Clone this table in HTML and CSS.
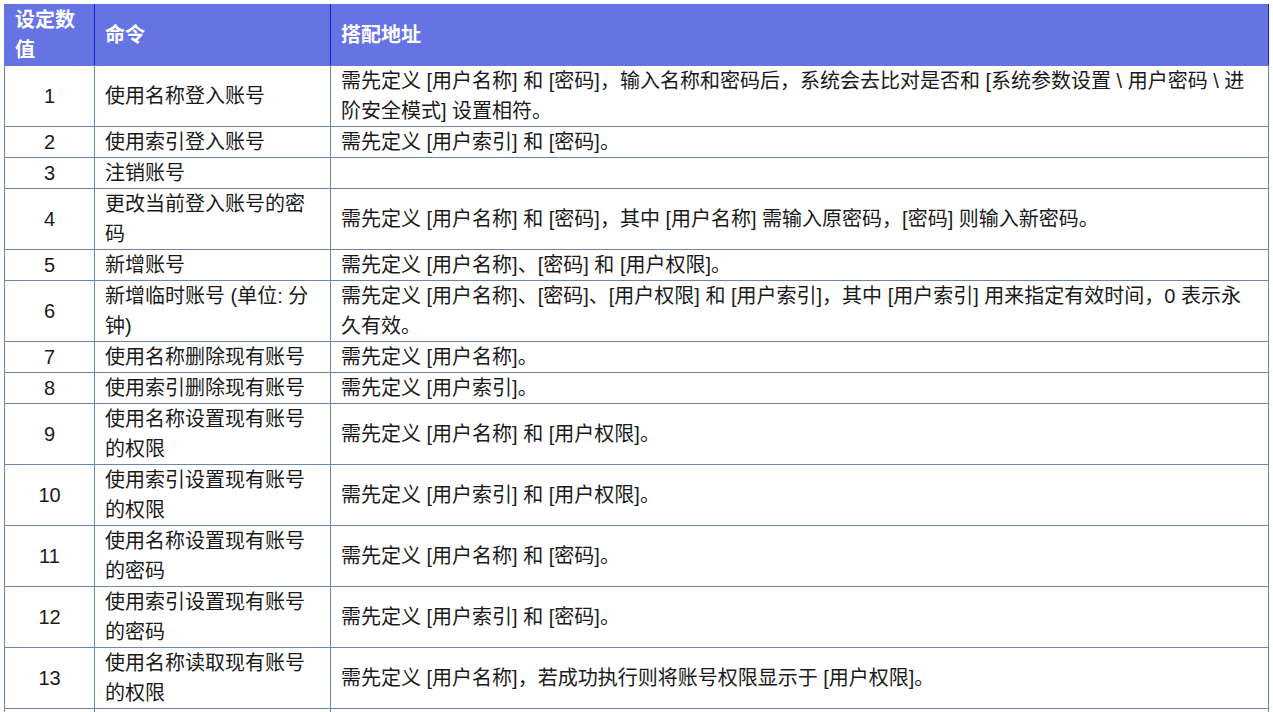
FILE: index.html
```html
<!DOCTYPE html>
<html lang="zh">
<head>
<meta charset="utf-8">
<link rel="stylesheet" href="styles.css">
</head>
<body>
<div class="page">
<table class="cmd">
<colgroup><col class="c1"><col class="c2"><col class="c3"></colgroup>
<thead>
<tr><th>设定数值</th><th>命令</th><th>搭配地址</th></tr>
</thead>
<tbody>
<tr><td class="num">1</td><td>使用名称登入账号</td><td>需先定义 [用户名称] 和 [密码]，输入名称和密码后，系统会去比对是否和 [系统参数设置 \ 用户密码 \ 进阶安全模式] 设置相符。</td></tr>
<tr><td class="num">2</td><td>使用索引登入账号</td><td>需先定义 [用户索引] 和 [密码]。</td></tr>
<tr><td class="num">3</td><td>注销账号</td><td></td></tr>
<tr><td class="num">4</td><td>更改当前登入账号的密码</td><td>需先定义 [用户名称] 和 [密码]，其中 [用户名称] 需输入原密码，[密码] 则输入新密码。</td></tr>
<tr><td class="num">5</td><td>新增账号</td><td>需先定义 [用户名称]、[密码] 和 [用户权限]。</td></tr>
<tr><td class="num">6</td><td>新增临时账号 (单位: 分钟)</td><td>需先定义 [用户名称]、[密码]、[用户权限] 和 [用户索引]，其中 [用户索引] 用来指定有效时间，0 表示永久有效。</td></tr>
<tr><td class="num">7</td><td>使用名称删除现有账号</td><td>需先定义 [用户名称]。</td></tr>
<tr><td class="num">8</td><td>使用索引删除现有账号</td><td>需先定义 [用户索引]。</td></tr>
<tr><td class="num">9</td><td>使用名称设置现有账号的权限</td><td>需先定义 [用户名称] 和 [用户权限]。</td></tr>
<tr><td class="num">10</td><td>使用索引设置现有账号的权限</td><td>需先定义 [用户索引] 和 [用户权限]。</td></tr>
<tr><td class="num">11</td><td>使用名称设置现有账号的密码</td><td>需先定义 [用户名称] 和 [密码]。</td></tr>
<tr><td class="num">12</td><td>使用索引设置现有账号的密码</td><td>需先定义 [用户索引] 和 [密码]。</td></tr>
<tr><td class="num">13</td><td>使用名称读取现有账号的权限</td><td>需先定义 [用户名称]，若成功执行则将账号权限显示于 [用户权限]。</td></tr>
<tr><td class="num">14</td><td>使用索引读取现有账号的权限</td><td>需先定义 [用户索引]，若成功执行则将账号权限显示于 [用户权限]。</td></tr>
</tbody>
</table>
</div>
</body>
</html>
```

FILE: styles.css
```css
html, body {
  margin: 0;
  padding: 0;
  background: #ffffff;
}
.page {
  padding: 4px;
}
.cmd {
  border-collapse: collapse;
  table-layout: fixed;
  width: 1264px;
  font-family: "Liberation Sans", "Noto Sans CJK SC", sans-serif;
  font-size: 20px;
  line-height: 30px;
  color: #1a1a1a;
}
.c1 { width: 90px; }
.c2 { width: 236px; }
.c3 { width: 938px; }
.cmd th {
  background: #6673e3;
  color: #ffffff;
  font-weight: bold;
  text-align: left;
  vertical-align: middle;
  padding: 0 10px;
  border: 1px solid #6673e3;
  border-right: 1px solid #1c1ccc;
}
.cmd th:last-child {
  border-right-color: #1c1ccc;
}
.cmd td {
  padding: 0 10px;
  vertical-align: middle;
  border: 1px solid #6a84b4;
}
.cmd td.num {
  text-align: center;
}
```
